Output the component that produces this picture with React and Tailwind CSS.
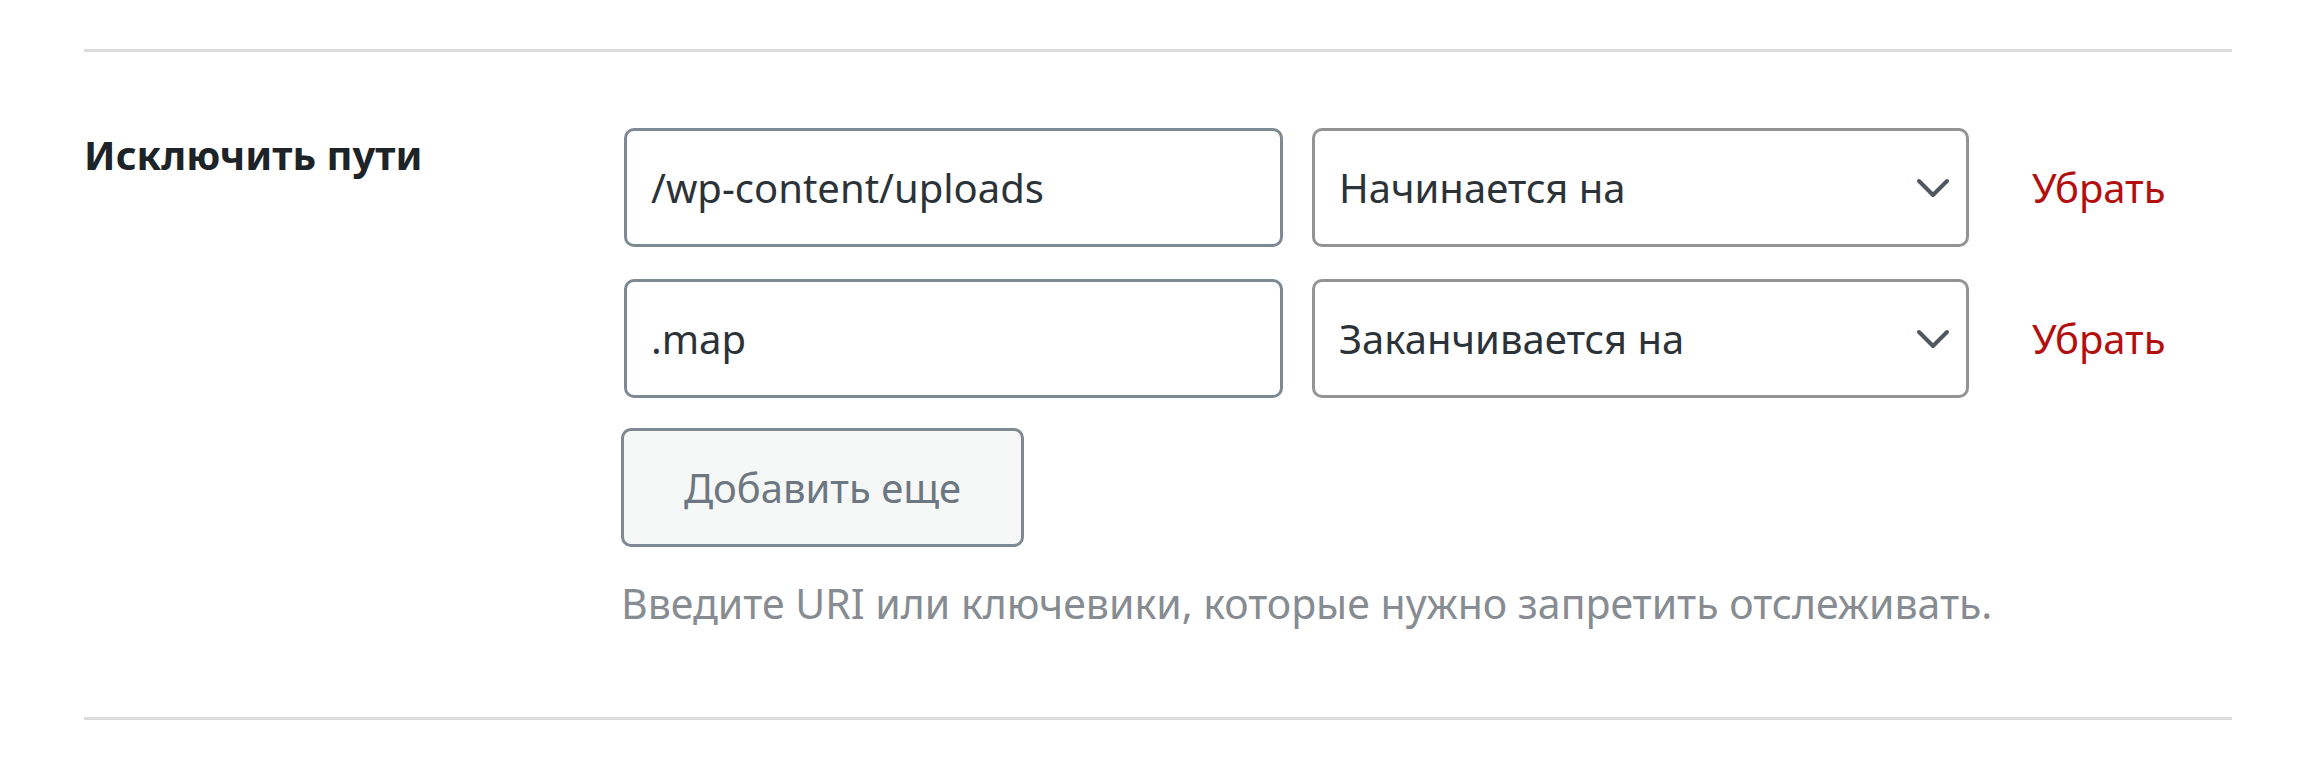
const FONT = "font-['Noto_Sans','Open_Sans',sans-serif]";

const RULES = [
  { path: "/wp-content/uploads", match: "Начинается на" },
  { path: ".map", match: "Заканчивается на" },
];

function Chevron() {
  return (
    <svg width="34" height="20" viewBox="0 0 34 20" fill="none" stroke="#50575e" strokeWidth="4" strokeLinecap="round" strokeLinejoin="round">
      <polyline points="3 3 17 17 31 3" />
    </svg>
  );
}

function RuleRow({ rule }) {
  return (
    <div className="flex items-center">
      <div className="ml-[3px] w-[659px] h-[119px] border-[3px] border-[#7e8993] rounded-[10px] bg-white flex items-center pl-[24px]">
        <span className="text-[40px] text-[#2c3338] leading-none">{rule.path}</span>
      </div>
      <div className="ml-[29px] w-[657px] h-[119px] border-[3px] border-[#949494] rounded-[10px] bg-white flex items-center justify-between pl-[24px] pr-[16px]">
        <span className="text-[40px] text-[#2c3338] leading-none">{rule.match}</span>
        <Chevron />
      </div>
      <a className="ml-[63px] text-[40px] text-[#b40f0f] leading-none">Убрать</a>
    </div>
  );
}

export default function App() {
  return (
    <div className={`bg-white w-[2316px] h-[762px] px-[84px] ${FONT}`}>
      <div className="pt-[49px]">
        <div className="h-[3px] bg-[#dcdcde]" />
      </div>
      <div className="flex pt-[76px] pb-[93px]">
        <div className="w-[537px] shrink-0 pt-[2px]">
          <p className="text-[40px] font-bold text-[#1d2327] leading-tight">Исключить пути</p>
        </div>
        <div className="flex flex-col">
          <div className="flex flex-col gap-[32px]">
            {RULES.map((r) => (
              <RuleRow key={r.path} rule={r} />
            ))}
          </div>
          <button className="mt-[30px] w-[403px] h-[119px] border-[3px] border-[#7e8993] rounded-[10px] bg-[#f6f7f7] text-[40px] text-[#6c7781]">
            Добавить еще
          </button>
          <p className="mt-[36px] text-[41px] text-[#878c92] leading-none">
            Введите URI или ключевики, которые нужно запретить отслеживать.
          </p>
        </div>
      </div>
      <div className="h-[3px] bg-[#dcdcde]" />
    </div>
  );
}
